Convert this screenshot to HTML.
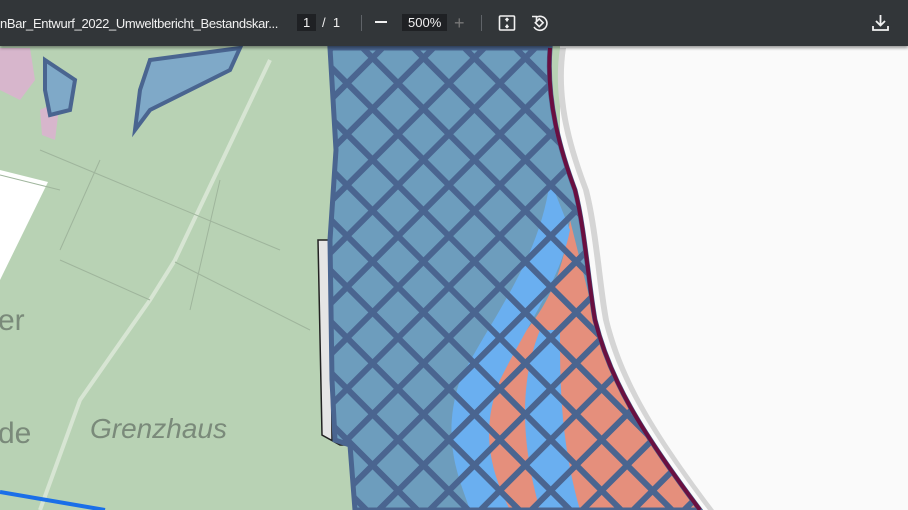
<!DOCTYPE html>
<html><head><meta charset="utf-8"><style>
html,body{margin:0;padding:0;width:908px;height:510px;overflow:hidden;background:#fafafa;font-family:"Liberation Sans",sans-serif}
#bar{position:absolute;left:0;top:0;width:908px;height:46px;background:#323639;color:#f1f1f1;font-size:14px;box-shadow:0 2px 3px rgba(0,0,0,.4);z-index:2}
#bar span{position:absolute;top:15px}
.box{background:#1f2124;padding:1px 6px}
.sep{position:absolute;top:15px;width:1px;height:16px;background:#5f6368}
</style></head><body>
<div id="bar">
<span style="left:0;font-size:13px;letter-spacing:-0.35px;top:16px">nBar_Entwurf_2022_Umweltbericht_Bestandskar...</span>
<span class="box" style="left:297px;top:14px;font-size:13px">1</span>
<span style="left:322px;font-size:13px">/&nbsp;&nbsp;1</span>
<div class="sep" style="left:361px"></div>
<span style="left:375px;top:21px;width:12px;height:2px;background:#f1f1f1"></span>
<span class="box" style="left:402px;top:14px;font-size:13px">500%</span>
<span style="left:454px;top:13px;color:#777;font-size:18px">+</span>
<div class="sep" style="left:481px"></div>
<svg style="position:absolute;left:498px;top:14px" width="18" height="18" viewBox="0 0 18 18" fill="none" stroke="#f1f1f1" stroke-width="1.6"><rect x="1.5" y="2" width="15" height="14" rx="1"/><path d="M9 4.5v3M7.5 6l1.5-1.5L10.5 6M9 13.5v-3M7.5 12l1.5 1.5 1.5-1.5"/></svg>
<svg style="position:absolute;left:530px;top:13px" width="19" height="19" viewBox="0 0 19 19" fill="none" stroke="#f1f1f1" stroke-width="1.6"><path d="M6 4.5A7 7 0 1 1 4 14"/><path d="M2 3.5h4.5V8"/><rect x="6.5" y="7" width="5.5" height="5.5" transform="rotate(45 9.25 9.75)"/></svg>
<svg style="position:absolute;left:871px;top:13px" width="19" height="19" viewBox="0 0 19 19" fill="none" stroke="#f1f1f1" stroke-width="1.8"><path d="M9.5 2v10M5 8l4.5 4.5L14 8M2 13v4h15v-4"/></svg>
</div>
<svg style="position:absolute;left:0;top:0" width="908" height="510" viewBox="0 0 908 510">
<defs>
<pattern id="h" width="36" height="36" patternUnits="userSpaceOnUse" patternTransform="rotate(45 345 60)">
<rect x="0" y="0" width="36" height="6" fill="#4a6590"/><rect x="0" y="0" width="6" height="36" fill="#4a6590"/>
</pattern>
<clipPath id="c"><path id="reg" d="M335 48 L550 48 C546 100 560 150 575 190 C585 230 588 280 595 320 C610 380 640 430 700 510 L355 510 L350 445 L335 440 L332 380 L330 240 L336 150 L330 48Z"/></clipPath>
</defs>
<rect x="0" y="46" width="560" height="464" fill="#b8d2b4"/>
<path d="M0 170 L48 182 L0 280Z" fill="#fff"/>
<path d="M0 48 L30 48 L35 80 L20 100 L0 90Z" fill="#d7b6cc"/>
<path d="M40 110 L60 100 L55 140 L42 135Z" fill="#d7b6cc"/>
<path d="M270 60 L175 260 L150 300 L80 400 L40 510" stroke="#d7e5d3" stroke-width="4" fill="none"/>
<path d="M175 262 L310 330 M150 300 L60 260 M0 175 L60 190 M40 150 L280 250 M100 160 L60 250 M220 180 L190 310" stroke="#9fb59c" stroke-width="1" fill="none"/>
<path d="M0 492 L105 510" stroke="#1a6fe8" stroke-width="4"/>
<path d="M45 60 L75 80 L70 110 L50 115 L45 90Z" fill="#7fa9c8" stroke="#4a6590" stroke-width="4"/>
<path d="M150 60 L240 48 L230 70 L150 110 L135 130 L140 90Z" fill="#7fa9c8" stroke="#4a6590" stroke-width="4"/>
<path d="M318 240 L330 240 L332 440 L355 445 L340 445 L322 435Z" fill="#e5e5e5" stroke="#222" stroke-width="1.5"/>
<text x="90" y="438" font-size="28" font-style="italic" fill="#7a8a7a" font-family="Liberation Sans,sans-serif">Grenzhaus</text>
<text x="-2" y="330" font-size="30" fill="#7a8a7a">er</text>
<text x="-2" y="443" font-size="30" fill="#7a8a7a">de</text>
<path d="M560 48 C552 100 568 150 583 190 C593 230 596 280 603 320 C618 380 648 430 708 510 L908 510 L908 48Z" fill="#d5d5d5"/>
<path d="M566 48 C558 100 574 150 589 190 C599 230 602 280 609 320 C624 380 654 430 714 510 L908 510 L908 48Z" fill="#fafafa"/>
<g clip-path="url(#c)">
<rect x="300" y="46" width="420" height="470" fill="#6d9dbd"/>
<path d="M570 220 C560 300 530 330 480 380 C450 420 460 470 470 510 L700 510 C640 430 610 380 595 320Z" fill="#e58f7c"/>
<path d="M550 180 C540 260 490 320 460 380 C440 440 460 480 470 510 L510 510 C490 470 480 430 500 380 C530 320 560 280 570 230Z" fill="#6aaff0"/>
<path d="M540 330 C520 380 520 440 540 510 L580 510 C560 440 560 380 560 330Z" fill="#6aaff0"/>
<rect x="300" y="46" width="420" height="470" fill="url(#h)"/>
</g>
<use href="#reg" fill="none" stroke="#4a6590" stroke-width="5"/>
<path d="M550 48 C546 100 560 150 575 190 C585 230 588 280 595 320 C610 380 640 430 700 510" fill="none" stroke="#6a0f40" stroke-width="4"/>
</svg>
</body></html>
